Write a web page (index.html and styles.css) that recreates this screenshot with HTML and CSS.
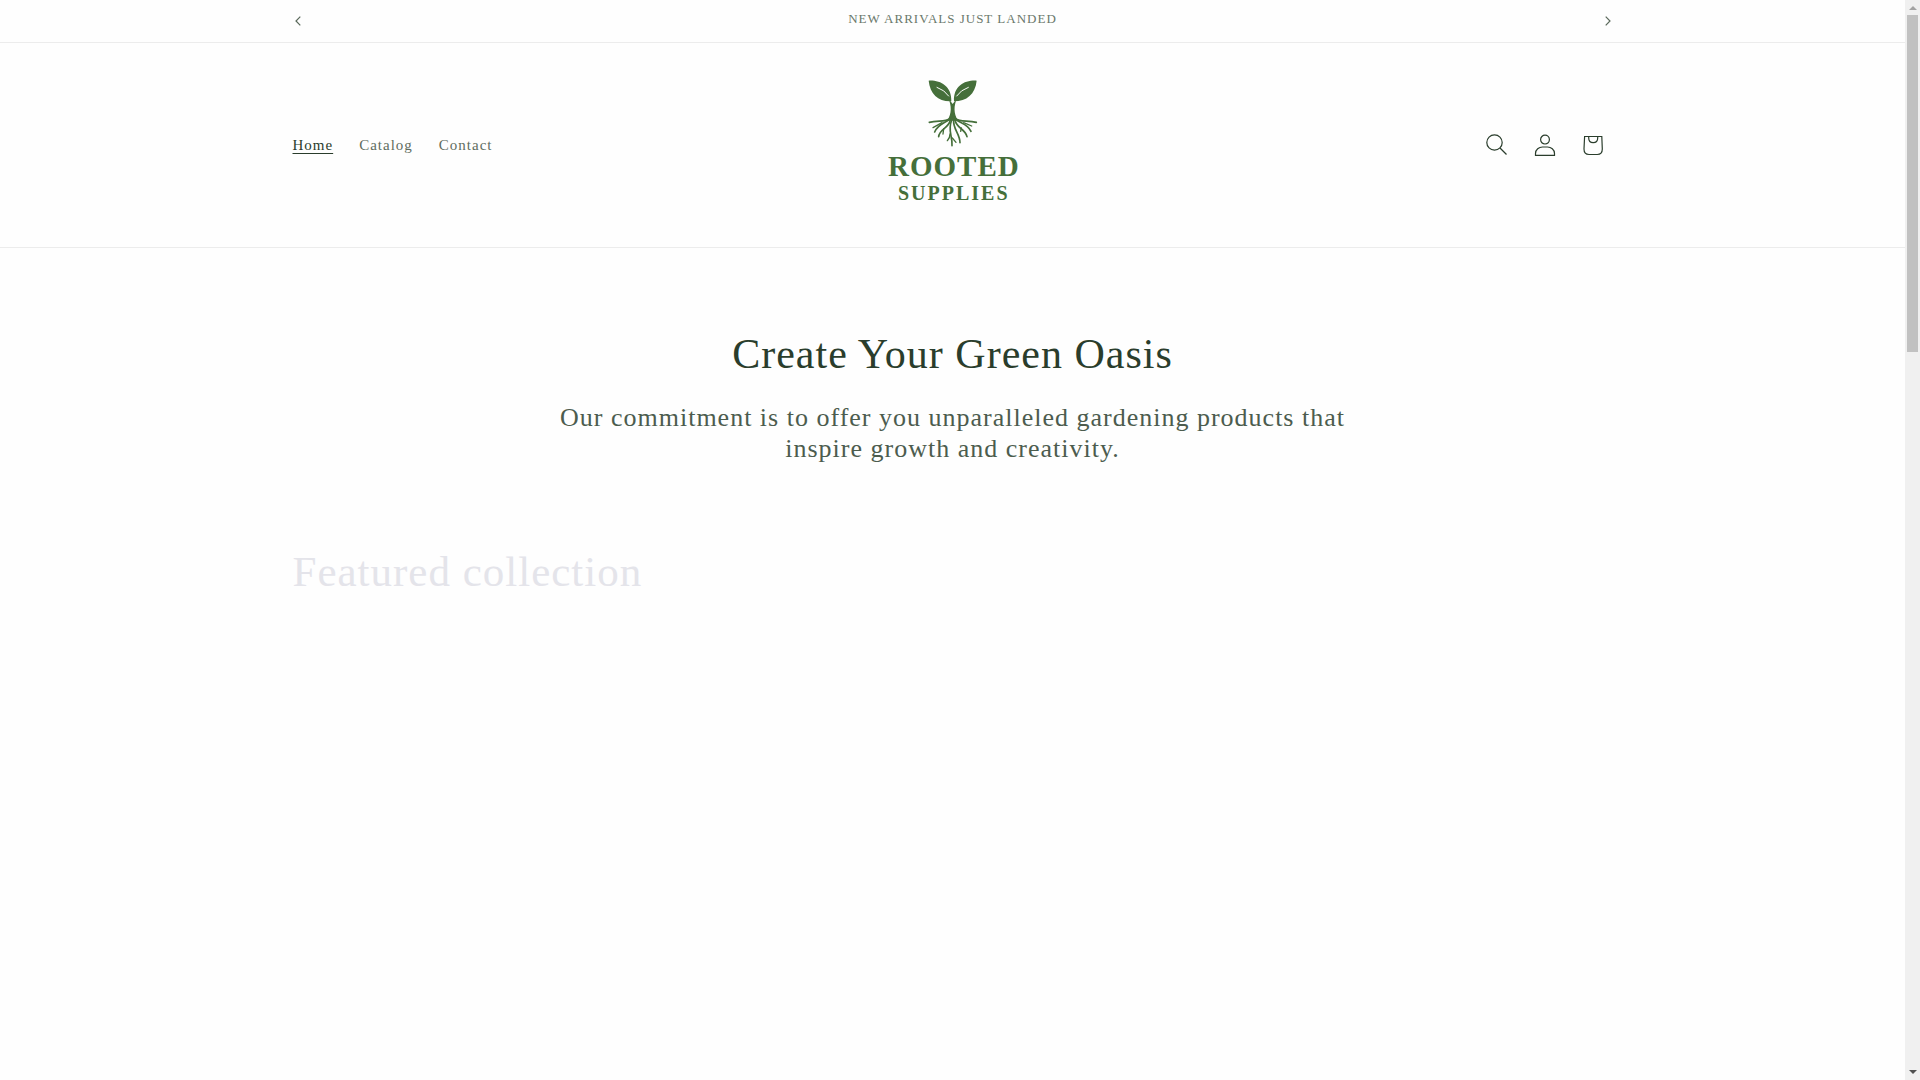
FILE: index.html
```html
<!DOCTYPE html>
<html lang="en">
<head>
  <meta charset="UTF-8">
  <meta name="viewport" content="width=device-width, initial-scale=1.0">
  <title>Rooted Supplies</title>
  <link rel="stylesheet" href="styles.css">
</head>
<body>
  <div class="page">
    <div class="announcement-bar">
      <div class="announcement-inner">
        <button class="slider-button" type="button" aria-label="Previous announcement">
          <svg width="6" height="10" viewBox="0 0 6 10"><path d="M5.3.6 1 5l4.3 4.4" fill="none" stroke="currentColor" stroke-width="1.2"/></svg>
        </button>
        <p class="announcement-text">NEW ARRIVALS JUST LANDED</p>
        <button class="slider-button" type="button" aria-label="Next announcement">
          <svg width="6" height="10" viewBox="0 0 6 10"><path d="M.7.6 5 5 .7 9.4" fill="none" stroke="currentColor" stroke-width="1.2"/></svg>
        </button>
      </div>
    </div>

    <header class="header">
      <div class="header-inner">
        <nav class="menu">
          <a class="menu-link active" href="#">Home</a>
          <a class="menu-link" href="#">Catalog</a>
          <a class="menu-link" href="#">Contact</a>
        </nav>

        <a class="logo" href="#">
          <svg width="186" height="170" viewBox="0 0 186 170" role="img" aria-label="Rooted Supplies">
            <g transform="scale(.33333)">
              <path fill="#456f3a" d="M206 62C240 60 276 78 274 124C236 126 210 102 206 62ZM350 62C314 60 280 78 282 124C320 124 346 102 350 62Z"/>
              <path fill="#456f3a" d="M266 116C274 138 276 158 262 182H294C280 158 282 138 290 116L278 132Z"/>
              <path fill="none" stroke="#fff" stroke-width="3" stroke-linecap="round" d="M231 82Q254 90 266 108M325 82Q302 90 290 108"/>
              <g fill="none" stroke="#456f3a" stroke-width="5" stroke-linecap="round" stroke-linejoin="round">
                <path d="M270 175C256 188 234 180 208 187M286 175C300 188 322 180 349 187"/>
                <path d="M268 178C256 190 236 190 224 216M288 178C300 190 322 190 333 214"/>
                <path d="M271 180C266 206 238 206 236 230M285 180C290 206 316 206 321 230"/>
                <path d="M275 180C262 214 278 226 276 257M281 180C278 206 300 222 300 248"/>
                <path d="M246 188L219 203M311 188L335 198M251 206L249 222M304 204L302 214M270 222Q270 234 262 242M277 234L288 247" stroke-width="4"/>
              </g>
            </g>
            <text class="logo-name" x="28" y="116">ROOTED</text>
            <text class="logo-sub" x="38" y="140">SUPPLIES</text>
          </svg>
        </a>

        <div class="header-icons">
          <button class="icon-button" type="button" aria-label="Search">
            <svg width="22" height="22" viewBox="0 0 22 22"><circle cx="8.500" cy="8.500" r="7.700"/><path d="M14 14 20.500 20.500"/></svg>
          </button>
          <a class="icon-button" href="#" aria-label="Log in">
            <svg width="22" height="22" viewBox="0 0 22 22"><circle cx="11" cy="5.600" r="4.400"/><path d="M1.500 21.300V19.500C1.500 15.500 5 13 8.500 13H13.500C17 13 20.500 15.500 20.500 19.500V21.300Z"/></svg>
          </a>
          <a class="icon-button" href="#" aria-label="Cart">
            <svg width="22" height="22" viewBox="0 0 22 22"><path d="M2.600 2.500H19.800L20.300 15C20.300 18.500 18.300 20.500 15.300 20.500H7C4 20.500 2 18.500 2 15ZM6.700 2.500V4C6.700 10.200 15.700 10.200 15.700 4V2.500"/></svg>
          </a>
        </div>
      </div>
    </header>

    <main class="content">
      <section class="rich-text">
        <h1>Create Your Green Oasis</h1>
        <p>Our commitment is to offer you unparalleled gardening products that inspire growth and creativity.</p>
      </section>

      <section class="collection">
        <h2>Featured collection</h2>
      </section>
    </main>
  </div>

  <div class="scrollbar" aria-hidden="true">
    <span class="scroll-arrow up"></span>
    <span class="scroll-thumb"></span>
    <span class="scroll-arrow down"></span>
  </div>
</body>
</html>
```
FILE: styles.css
```css
* {
  box-sizing: border-box;
}

body {
  margin: 0;
  display: flex;
  min-height: 100vh;
  background: #fefefe;
  color: #2a3d2c;
  font-family: "Liberation Serif", "Times New Roman", serif;
  letter-spacing: 1px;
}

h1, h2, p {
  margin: 0;
  font-weight: 400;
}

.page {
  flex: 1;
}

/* Announcement bar */
.announcement-bar {
  border-bottom: 1px solid #ececec;
}

.announcement-inner {
  display: flex;
  align-items: center;
  max-width: 1354px;
  height: 42px;
  margin: 0 auto;
}

.announcement-text {
  flex: 1;
  padding-bottom: 4px;
  text-align: center;
  font-size: 13px;
  line-height: 20px;
  color: #6a786b;
}

.slider-button,
.icon-button {
  display: flex;
  align-items: center;
  justify-content: center;
  padding: 0;
  border: 0;
  background: none;
  color: #2a3d2c;
  cursor: pointer;
}

.slider-button {
  width: 44px;
  height: 42px;
  color: #5a695b;
}

/* Header */
.header {
  border-bottom: 1px solid #ececec;
}

.header-inner {
  display: grid;
  grid-template-columns: 1fr auto 1fr;
  align-items: center;
  max-width: 1346px;
  margin: 0 auto;
  padding: 17px 0;
}

.menu {
  display: flex;
}

.menu-link {
  padding: 13px;
  font-size: 15px;
  line-height: 20px;
  color: #5f6d60;
  text-decoration: none;
}

.menu-link:hover,
.menu-link.active {
  color: #2a3d2c;
  text-decoration: underline;
  text-decoration-thickness: 1px;
  text-underline-offset: 3px;
}

.logo svg {
  display: block;
}

.logo-name,
.logo-sub {
  fill: #456f3a;
  font-weight: 700;
}

.logo-name {
  font-size: 29px;
  letter-spacing: 1px;
}

.logo-sub {
  font-size: 20px;
  letter-spacing: 2px;
}

.header-icons {
  display: flex;
  justify-content: flex-end;
  padding-right: 9px;
}

.icon-button {
  width: 48px;
  height: 48px;
}

.icon-button svg {
  fill: none;
  stroke: currentColor;
  stroke-width: 1.2;
}

/* Main content */
.rich-text {
  max-width: 800px;
  margin: 0 auto;
  padding: 78px 0 80px;
  text-align: center;
}

h1 {
  font-size: 42px;
  line-height: 56px;
}

h2 {
  font-size: 43px;
  line-height: 56px;
}

.rich-text p {
  margin-top: 20px;
  font-size: 26px;
  line-height: 31px;
  color: #4c5c4e;
}

.collection {
  max-width: 1320px;
  margin: 0 auto;
}

.collection h2 {
  color: #e4e4ea;
}

/* Scrollbar */
.scrollbar {
  display: flex;
  flex-direction: column;
  align-items: center;
  width: 15px;
  height: 100vh;
  padding: 6px 0;
  background: #f0f0f0;
}

.scroll-thumb {
  width: 11px;
  height: 337px;
  margin: 5px 0 auto;
  background: #c1c1c1;
}

.scroll-arrow {
  border: 4px solid transparent;
}

.scroll-arrow.up {
  border-top: 0;
  border-bottom-color: #a3a3a3;
}

.scroll-arrow.down {
  border-bottom: 0;
  border-top-color: #505050;
}
```
